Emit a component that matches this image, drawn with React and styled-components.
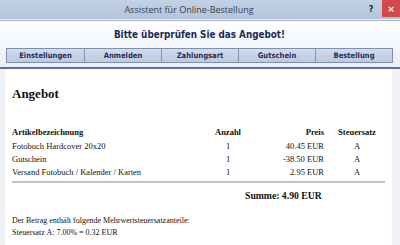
import React from "react";
import styled, { createGlobalStyle } from "styled-components";

const Global = createGlobalStyle`
  html, body { margin: 0; padding: 0; }
  body { width: 400px; height: 245px; overflow: hidden; background: #eef1f6; }
`;

const Window = styled.div`
  width: 400px;
  height: 245px;
  display: flex;
  flex-direction: column;
  background: #eef1f6;
`;

const TitleBar = styled.div`
  height: 19px;
  display: flex;
  align-items: center;
  background: linear-gradient(#c3d2e6, #b2c3dc);
  border-bottom: 1px solid #e9eef6;
`;

const TitleText = styled.div`
  flex: 1;
  text-align: center;
  font-family: "Open Sans", "DejaVu Sans", sans-serif;
  font-size: 9px;
  color: #3a3f48;
  padding-left: 14px;
`;

const Help = styled.div`
  width: 14px;
  font-family: "DejaVu Sans", sans-serif;
  font-weight: bold;
  font-size: 8px;
  color: #1d2330;
  text-align: center;
`;

const Close = styled.div`
  width: 18px;
  height: 17px;
  align-self: flex-start;
  margin-left: 4px;
  background: #cf4a4a;
  color: #fff;
  font-family: "DejaVu Sans", sans-serif;
  font-weight: bold;
  font-size: 9px;
  display: flex;
  align-items: center;
  justify-content: center;
`;

const Header = styled.div`
  border-top: 1px solid #a9b4c4;
  background: linear-gradient(#ffffff, #e9eef5);
  padding: 7px 7px 4px 6px;
  display: flex;
  flex-direction: column;
  align-items: center;
  gap: 6px;
  border-bottom: 2px solid #5673a3;
`;

const Heading = styled.div`
  font-family: "DejaVu Sans Condensed", "DejaVu Sans", sans-serif;
  font-weight: bold;
  font-size: 9.8px;
  color: #1b2a55;
  height: 14px;
  line-height: 14px;
`;

const Tabs = styled.div`
  align-self: stretch;
  display: grid;
  grid-template-columns: repeat(5, 1fr);
  border: 1px solid #7f90ac;
`;

const Tab = styled.div`
  height: 13px;
  line-height: 13px;
  text-align: center;
  font-family: "DejaVu Sans Condensed", "DejaVu Sans", sans-serif;
  font-weight: bold;
  font-size: 7.6px;
  color: #1f2d55;
  background: linear-gradient(#d3dced, #bcc9de);
  border-left: ${(p) => (p.first ? "none" : "1px solid #8595b1")};
`;

const Content = styled.div`
  flex: 1;
  margin: 0 8px 0 5px;
  background: #ffffff;
  padding: 17px 7px 0 7px;
  font-family: "Liberation Serif", "Times New Roman", serif;
  font-size: 8.5px;
  color: #111;
`;

const Title = styled.div`
  font-weight: bold;
  font-size: 13px;
  height: 24px;
`;

const Table = styled.div`
  margin-top: 16px;
  display: grid;
  grid-template-columns: 196px 40px 76px 66px;
  line-height: 13px;
`;

const Cell = styled.div`
  text-align: ${(p) => p.align || "left"};
  font-weight: ${(p) => (p.bold ? "bold" : "normal")};
  padding-bottom: ${(p) => (p.head ? "1px" : "0")};
`;

const Rule = styled.div`
  height: 2px;
  background: #c4c4c4;
  margin-top: 2px;
`;

const Sum = styled.div`
  font-weight: bold;
  font-size: 9.7px;
  margin: 7px 0 0 233px;
`;

const Notes = styled.div`
  margin-top: 14px;
  line-height: 12px;
  font-size: 8px;
`;

const rows = [
  ["Fotobuch Hardcover 20x20", "1", "40.45 EUR", "A"],
  ["Gutschein", "1", "-38.50 EUR", "A"],
  ["Versand Fotobuch / Kalender / Karten", "1", "2.95 EUR", "A"],
];

export default function App() {
  return (
    <Window>
      <Global />
      <TitleBar>
        <TitleText>Assistent für Online-Bestellung</TitleText>
        <Help>?</Help>
        <Close>×</Close>
      </TitleBar>
      <Header>
        <Heading>Bitte überprüfen Sie das Angebot!</Heading>
        <Tabs>
          {["Einstellungen", "Anmelden", "Zahlungsart", "Gutschein", "Bestellung"].map((t, i) => (
            <Tab key={t} first={i === 0}>{t}</Tab>
          ))}
        </Tabs>
      </Header>
      <Content>
        <Title>Angebot</Title>
        <Table>
          <Cell bold head>Artikelbezeichnung</Cell>
          <Cell bold head align="center">Anzahl</Cell>
          <Cell bold head align="right">Preis</Cell>
          <Cell bold head align="center">Steuersatz</Cell>
          {rows.map((r) => (
            <React.Fragment key={r[0]}>
              <Cell>{r[0]}</Cell>
              <Cell align="center">{r[1]}</Cell>
              <Cell align="right">{r[2]}</Cell>
              <Cell align="center">{r[3]}</Cell>
            </React.Fragment>
          ))}
        </Table>
        <Rule />
        <Sum>Summe: 4.90 EUR</Sum>
        <Notes>
          Der Betrag enthält folgende Mehrwertsteuersatzanteile:
          <br />
          Steuersatz A: 7.00% = 0.32 EUR
        </Notes>
      </Content>
    </Window>
  );
}
